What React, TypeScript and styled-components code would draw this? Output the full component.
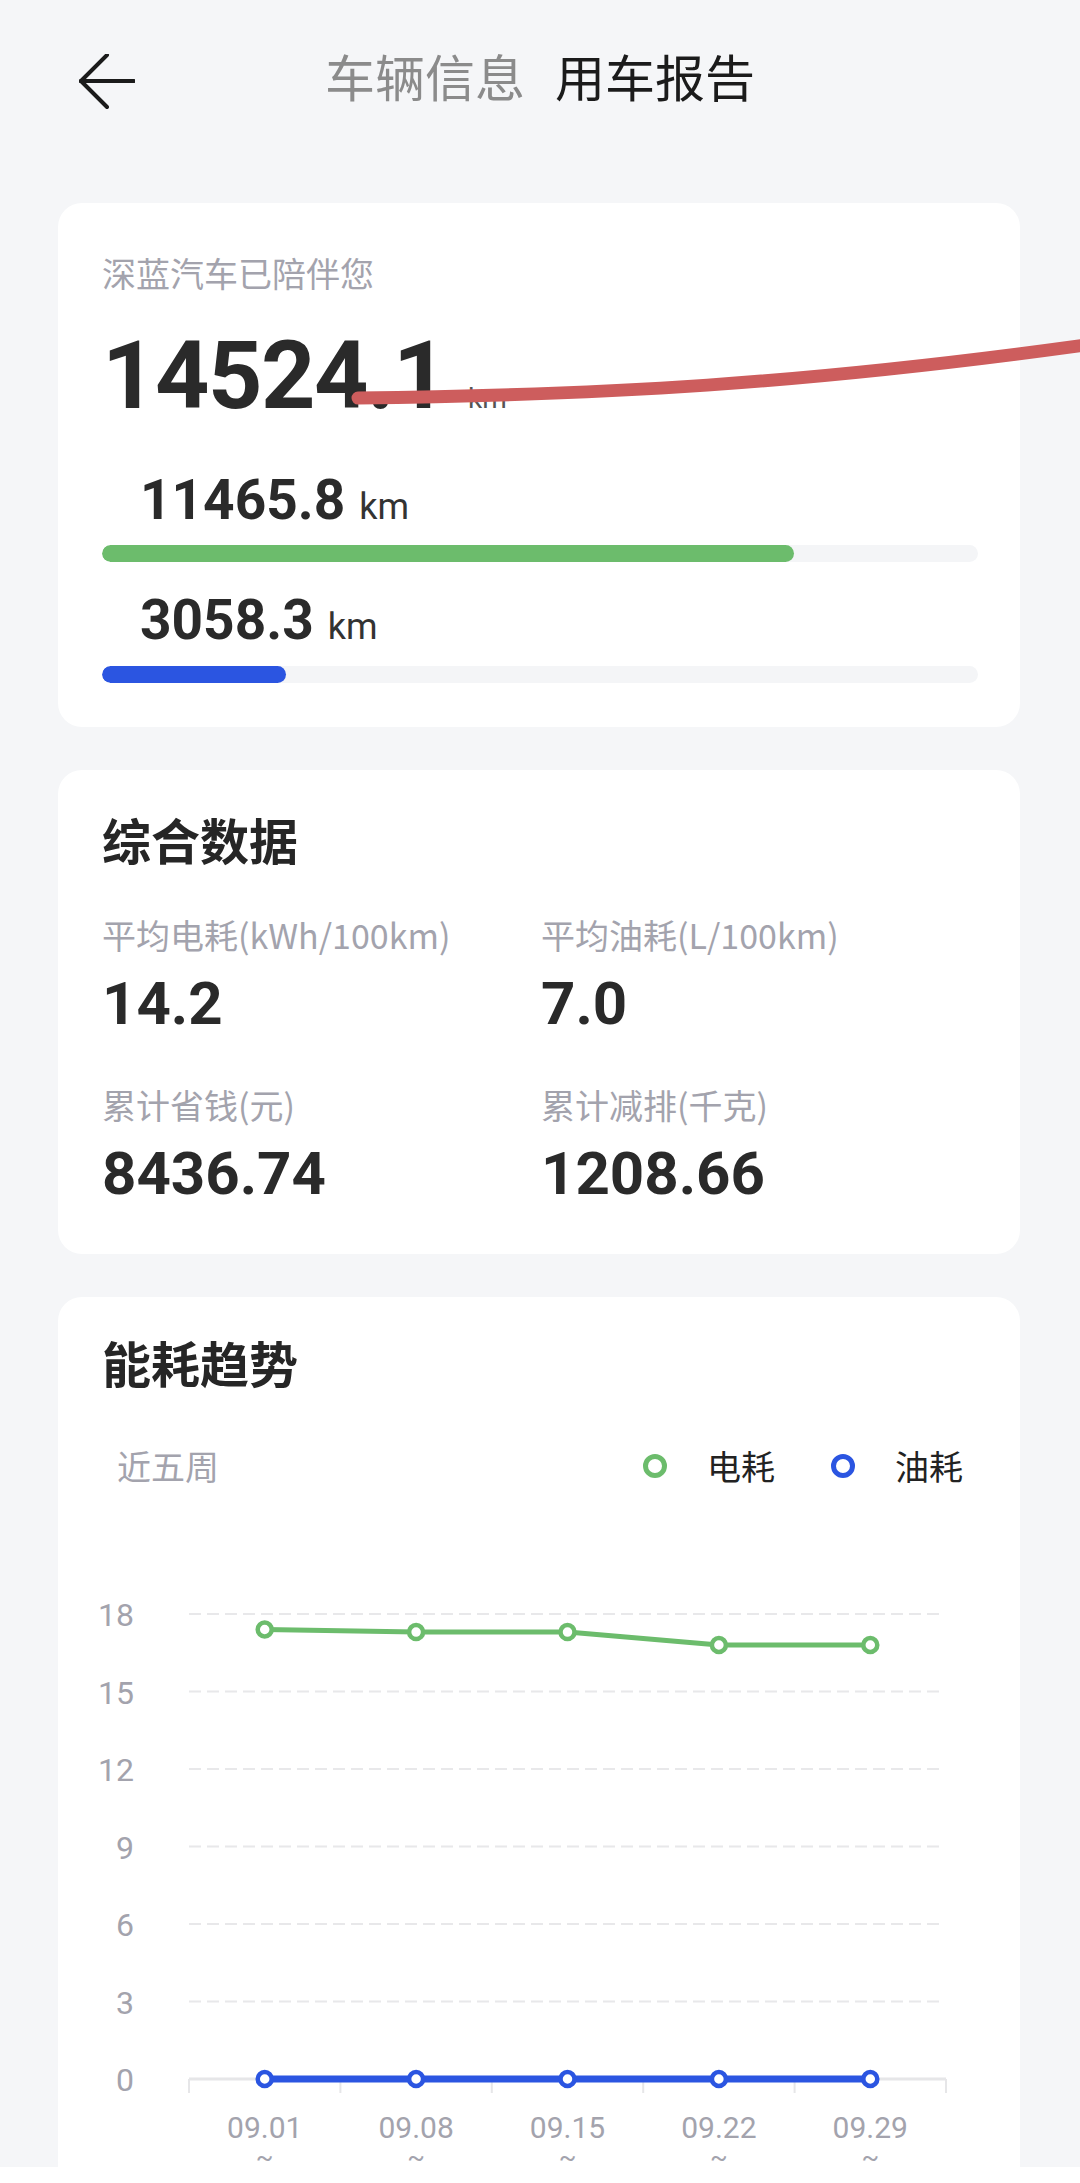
import React from 'react';
import styled, { createGlobalStyle } from 'styled-components';

const weeks = ['09.01', '09.08', '09.15', '09.22', '09.29'];
const electric = [17.4, 17.3, 17.3, 16.8, 16.8];
const fuel = [0, 0, 0, 0, 0];
const yTicks = [18, 15, 12, 9, 6, 3, 0];

const mileage = { total: 14524.1, electric: 11465.8, fuel: 3058.3 };

const stats = [
  { label: '平均电耗(kWh/100km)', value: '14.2' },
  { label: '平均油耗(L/100km)', value: '7.0' },
  { label: '累计省钱(元)', value: '8436.74' },
  { label: '累计减排(千克)', value: '1208.66' },
];

const GREEN = '#6cbc6c';
const BLUE = '#2b55e1';
const MUTED = '#a3a3ad';

const GlobalStyle = createGlobalStyle`
  html, body {
    margin: 0;
    padding: 0;
    background: #ffffff;
  }
  body {
    font-family: Roboto, "Noto Sans CJK SC", sans-serif;
    -webkit-font-smoothing: antialiased;
  }
`;

const Page = styled.div`
  position: relative;
  height: 2167px;
  overflow: hidden;
  background: #f5f6f8;
  display: flex;
  flex-direction: column;
`;

const Header = styled.header`
  display: grid;
  grid-template-columns: 1fr auto 1fr;
  align-items: center;
  height: 150px;
  flex-shrink: 0;
`;

const BackButton = styled.button`
  justify-self: start;
  display: flex;
  width: 56px;
  height: 56px;
  margin: 14px 0 0 79px;
  padding: 0;
  border: 0;
  background: none;
`;

const Tabs = styled.nav`
  display: flex;
  gap: 30px;
`;

const Tab = styled.span<{ $active?: boolean }>`
  font-family: "Noto Sans CJK SC", sans-serif;
  font-size: 50px;
  line-height: 50px;
  color: ${p => (p.$active ? '#1b1b1b' : '#8b8b8b')};
`;

const Content = styled.main`
  flex: 1;
  min-height: 0;
  display: flex;
  flex-direction: column;
  gap: 43px;
  padding: 53px 60px 0 58px;
`;

const Card = styled.section<{ $pad: string; $grow?: boolean }>`
  background: #ffffff;
  border-radius: 24px;
  padding: ${p => p.$pad};
  ${p => p.$grow && 'flex: 1; min-height: 0; overflow: hidden; border-bottom-left-radius: 0; border-bottom-right-radius: 0;'}
`;

const Caption = styled.div`
  font-family: "Noto Sans CJK SC", sans-serif;
  font-size: 34px;
  line-height: 34px;
  color: ${MUTED};
`;

const TotalRow = styled.div`
  display: flex;
  align-items: baseline;
  gap: 22px;
  height: 96px;
  margin-top: 38px;
`;

const TotalValue = styled.span`
  font-size: 95px;
  line-height: 96px;
  font-weight: 700;
  color: #2a2a2a;
  letter-spacing: -1.5px;
`;

const SmallUnit = styled.span`
  font-size: 28px;
  line-height: 1;
  color: #555;
`;

const DistanceRow = styled.div<{ $gap: number }>`
  display: flex;
  align-items: baseline;
  gap: 14px;
  height: 54px;
  margin-top: ${p => p.$gap}px;
  padding-left: 38px;
`;

const DistanceValue = styled.span`
  font-size: 55px;
  line-height: 54px;
  font-weight: 700;
  color: #2a2a2a;
`;

const Unit = styled.span`
  font-size: 36px;
  line-height: 1;
  color: #333;
`;

const Track = styled.div<{ $gap: number }>`
  height: 17px;
  margin-top: ${p => p.$gap}px;
  border-radius: 9px;
  background: #f4f5f7;
  overflow: hidden;
`;

const Fill = styled.div<{ $color: string }>`
  height: 100%;
  border-radius: 9px;
  background: ${p => p.$color};
`;

const SectionTitle = styled.h2`
  margin: 0;
  font-family: "Noto Sans CJK SC", sans-serif;
  font-size: 49px;
  line-height: 48px;
  font-weight: 700;
  color: #262626;
`;

const StatGrid = styled.div`
  display: grid;
  grid-template-columns: 439px 1fr;
  row-gap: 55px;
  margin-top: 55px;
`;

const Stat = styled.div`
  display: flex;
  flex-direction: column;
  gap: 23px;
`;

const StatValue = styled.span`
  font-size: 60px;
  line-height: 58px;
  font-weight: 700;
  color: #2a2a2a;
`;

const TrendHead = styled.div`
  padding-left: 44px;
`;

const LegendRow = styled.div`
  display: flex;
  align-items: center;
  justify-content: space-between;
  margin: 63px 57px 0 15px;
`;

const Legend = styled.div`
  display: flex;
  align-items: center;
  gap: 56px;
`;

const LegendItem = styled.div`
  display: flex;
  align-items: center;
  gap: 40px;
  font-family: "Noto Sans CJK SC", sans-serif;
  font-size: 34px;
  line-height: 34px;
  color: #222;
`;

const Dot = styled.span<{ $color: string }>`
  width: 14px;
  height: 14px;
  border: 5px solid ${p => p.$color};
  border-radius: 50%;
`;

const ChartSvg = styled.svg`
  display: block;
  margin-top: 15px;
`;

const Overlay = styled.svg`
  position: absolute;
  top: 0;
  left: 0;
  pointer-events: none;
`;

const BackIcon = () => (
  <svg width="56" height="56" viewBox="0 0 56 56" fill="none">
    <path d="M55 27H1.5M28 1 2 27l26 26" stroke="#1b1b1b" strokeWidth="4" strokeLinecap="round" strokeLinejoin="round" />
  </svg>
);

const TrendChart = () => {
  const left = 131;
  const right = 888;
  const zeroY = 581;
  const unit = 465 / 18;
  const band = (right - left) / weeks.length;
  const cx = (i: number) => left + band * (i + 0.5);
  const cy = (v: number) => zeroY - v * unit;
  const line = (vals: number[]) => vals.map((v, i) => `${cx(i)},${cy(v)}`).join(' ');

  return (
    <ChartSvg width="962" height="667" viewBox="0 0 962 667" fontFamily="Roboto, sans-serif">
      {yTicks.map(t => (
        <g key={t}>
          {t > 0 && (
            <line x1={left} x2={882} y1={cy(t)} y2={cy(t)} stroke="#e8e8ea" strokeWidth="2" strokeDasharray="12 6" />
          )}
          <text x="76" y={cy(t) + 12} textAnchor="end" fontSize="32" fill={MUTED}>
            {t}
          </text>
        </g>
      ))}
      <line x1={left} x2={right} y1={zeroY} y2={zeroY} stroke="#e6e6e8" strokeWidth="3" />
      {Array.from({ length: weeks.length + 1 }, (_, i) => (
        <line key={i} x1={left + band * i} x2={left + band * i} y1={zeroY} y2={zeroY + 14} stroke="#e6e6e8" strokeWidth="2" />
      ))}
      <polyline points={line(electric)} fill="none" stroke={GREEN} strokeWidth="5" strokeLinejoin="round" />
      <polyline points={line(fuel)} fill="none" stroke={BLUE} strokeWidth="7" strokeLinejoin="round" />
      {electric.map((v, i) => (
        <circle key={`e${i}`} cx={cx(i)} cy={cy(v)} r="7" fill="#fff" stroke={GREEN} strokeWidth="4.5" />
      ))}
      {fuel.map((v, i) => (
        <circle key={`f${i}`} cx={cx(i)} cy={cy(v)} r="7" fill="#fff" stroke={BLUE} strokeWidth="4.5" />
      ))}
      {weeks.map((w, i) => (
        <g key={w}>
          <text x={cx(i)} y="640" textAnchor="middle" fontSize="30" fill={MUTED}>
            {w}
          </text>
          <text x={cx(i)} y="668" textAnchor="middle" fontSize="26" fill={MUTED}>
            ~
          </text>
        </g>
      ))}
    </ChartSvg>
  );
};

const App = () => {
  const pct = (v: number) => `${(v / mileage.total) * 100}%`;

  return (
    <>
      <GlobalStyle />
      <Page>
        <Header>
          <BackButton aria-label="返回">
            <BackIcon />
          </BackButton>
          <Tabs>
            <Tab>车辆信息</Tab>
            <Tab $active>用车报告</Tab>
          </Tabs>
        </Header>

        <Content>
          <Card $pad="53px 42px 44px 44px">
            <Caption>深蓝汽车已陪伴您</Caption>
            <TotalRow>
              <TotalValue>{mileage.total.toFixed(1)}</TotalValue>
              <SmallUnit>km</SmallUnit>
            </TotalRow>

            <DistanceRow $gap={49}>
              <DistanceValue>{mileage.electric.toFixed(1)}</DistanceValue>
              <Unit>km</Unit>
            </DistanceRow>
            <Track $gap={18}>
              <Fill $color={GREEN} style={{ width: pct(mileage.electric) }} />
            </Track>

            <DistanceRow $gap={31}>
              <DistanceValue>{mileage.fuel.toFixed(1)}</DistanceValue>
              <Unit>km</Unit>
            </DistanceRow>
            <Track $gap={19}>
              <Fill $color={BLUE} style={{ width: pct(mileage.fuel) }} />
            </Track>
          </Card>

          <Card $pad="45px 42px 51px 44px">
            <SectionTitle>综合数据</SectionTitle>
            <StatGrid>
              {stats.map(s => (
                <Stat key={s.label}>
                  <Caption>{s.label}</Caption>
                  <StatValue>{s.value}</StatValue>
                </Stat>
              ))}
            </StatGrid>
          </Card>

          <Card $pad="41px 0 0 0" $grow>
            <TrendHead>
              <SectionTitle>能耗趋势</SectionTitle>
              <LegendRow>
                <Caption>近五周</Caption>
                <Legend>
                  <LegendItem>
                    <Dot $color={GREEN} />
                    电耗
                  </LegendItem>
                  <LegendItem>
                    <Dot $color={BLUE} />
                    油耗
                  </LegendItem>
                </Legend>
              </LegendRow>
            </TrendHead>
            <TrendChart />
          </Card>
        </Content>

        <Overlay width="1080" height="450" viewBox="0 0 1080 450">
          <path d="M358 398C600 395 800 385 1100 343" fill="none" stroke="#cd5d5d" strokeWidth="13" strokeLinecap="round" />
        </Overlay>
      </Page>
    </>
  );
};

export default App;
